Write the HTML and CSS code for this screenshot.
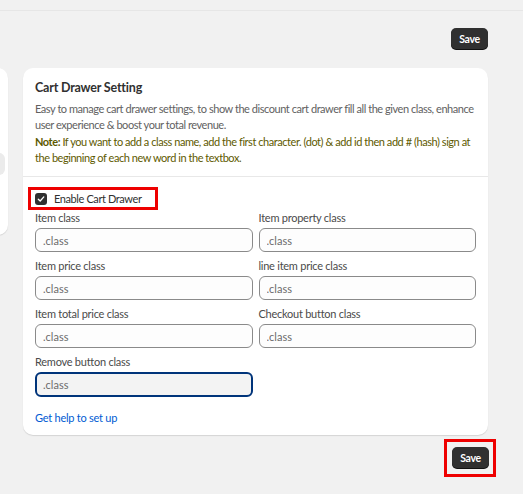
FILE: index.html
```html
<!DOCTYPE html>
<html lang="en">
<head>
    <meta charset="UTF-8">
    <meta name="viewport" content="width=device-width, initial-scale=1.0">
    <title>Cart Drawer Setting</title>
    <link rel="stylesheet" href="styles.css">
</head>
<body>
    <div class="topbar"></div>
    <div class="page">
        <div class="actions">
            <button class="btn-save">Save</button>
        </div>

        <div class="layout">
            <div class="side-card">
                <div class="side-item"></div>
            </div>

            <div class="card">
                <div class="card-head">
                    <h2>Cart Drawer Setting</h2>
                    <p class="desc">Easy to manage cart drawer settings, to show the discount cart drawer fill all the given class, enhance user experience &amp; boost your total revenue.</p>
                    <p class="note"><b>Note:</b> If you want to add a class name, add the first character. (dot) &amp; add id then add # (hash) sign at the beginning of each new word in the textbox.</p>
                </div>

                <div class="card-body">
                    <label class="enable">
                        <span class="check">
                            <svg width="8" height="8" viewBox="0 0 8 8"><path d="M1.3 4.2 L3.2 6 L6.8 1.9" fill="none" stroke="#fff" stroke-width="1.3" stroke-linecap="round" stroke-linejoin="round"/></svg>
                        </span>
                        Enable Cart Drawer
                    </label>

                    <div class="fields">
                        <div class="field">
                            <p>Item class</p>
                            <input type="text" placeholder=".class">
                        </div>
                        <div class="field">
                            <p>Item property class</p>
                            <input type="text" placeholder=".class">
                        </div>
                        <div class="field">
                            <p>Item price class</p>
                            <input type="text" placeholder=".class">
                        </div>
                        <div class="field">
                            <p>line item price class</p>
                            <input type="text" placeholder=".class">
                        </div>
                        <div class="field">
                            <p>Item total price class</p>
                            <input type="text" placeholder=".class">
                        </div>
                        <div class="field">
                            <p>Checkout button class</p>
                            <input type="text" placeholder=".class">
                        </div>
                        <div class="field">
                            <p>Remove button class</p>
                            <input type="text" class="focused" placeholder=".class">
                        </div>
                    </div>

                    <a href="#" class="help">Get help to set up</a>
                </div>
            </div>
        </div>

        <div class="actions bottom">
            <div class="mark">
                <button class="btn-save">Save</button>
            </div>
        </div>
    </div>
</body>
</html>
```

FILE: styles.css
```css
* {
    margin: 0;
    padding: 0;
    box-sizing: border-box;
}

body {
    font-family: Lato, "Open Sans", sans-serif;
    background-color: #f1f1f1;
    color: #303030;
    font-size: 11px;
    letter-spacing: -0.25px;
}
.topbar {
    height: 11px;
    border-bottom: 1px solid #e6e6e6;
}
.page {
    padding: 0 35px 0 0;
}
.actions {
    display: flex;
    justify-content: flex-end;
    padding-top: 17px;
}
.btn-save {
    background-color: #303030;
    color: white;
    font-family: inherit;
    font-size: 10.5px;
    font-weight: bold;
    letter-spacing: -0.3px;
    border: none;
    border-radius: 5px;
    width: 37px;
    height: 21px;
    cursor: pointer;
    box-shadow: 0 1px 0 #111;
}
.layout {
    display: flex;
    align-items: flex-start;
    gap: 15px;
    margin-top: 19px;
}
.side-card {
    width: 60px;
    height: 167px;
    margin-left: -52px;
    background-color: #fff;
    border-radius: 0 10px 10px 0;
    box-shadow: 0 1px 1px rgba(0, 0, 0, 0.12);
    padding-top: 85px;
}
.side-item {
    width: 57px;
    height: 22px;
    background-color: #ebebeb;
    border-radius: 0 6px 6px 0;
}
.card {
    flex: 1;
    background-color: #fff;
    border-radius: 10px;
    box-shadow: 0 1px 1px rgba(0, 0, 0, 0.12);
}
.card-head {
    padding: 12px 12px 10px;
    border-bottom: 1px solid #e8e8e8;
}
h2 {
    font-size: 12.5px;
    font-weight: 700;
    letter-spacing: -0.2px;
    color: #303030;
    margin-bottom: 6px;
}
.desc, .note {
    line-height: 16.3px;
    color: #616161;
    letter-spacing: -0.45px;
}
.note {
    color: #5e5a00;
}
.note b {
    font-weight: 700;
}
.card-body {
    padding: 10px 12px 11px;
}
.enable {
    display: inline-flex;
    align-items: center;
    gap: 7px;
    border: 3px solid #ee0000;
    padding: 0 13px 0 4px;
    height: 23px;
    margin-left: -7px;
    color: #303030;
    letter-spacing: -0.4px;
}
.check {
    width: 12px;
    height: 12px;
    background-color: #303030;
    border-radius: 3px;
    display: flex;
    align-items: center;
    justify-content: center;
}
.fields {
    display: grid;
    grid-template-columns: 1fr 1fr;
    column-gap: 6px;
    row-gap: 6px;
}
.field p {
    color: #4a4a4a;
    line-height: 15px;
    margin-bottom: 3px;
}
.field input {
    width: 100%;
    height: 24px;
    border: 1px solid #8a8a8a;
    border-radius: 6px;
    background-color: #fdfdfd;
    padding: 0 7px;
    font-family: inherit;
    font-size: 11px;
    outline: none;
}
.field input::placeholder {
    color: #6b6b6b;
}
.field input.focused {
    height: 25px;
    border: 2px solid #00347a;
    background-color: #f3f3f3;
    padding: 0 6px;
}
.help {
    display: inline-block;
    margin-top: 14px;
    color: #005bd3;
    text-decoration: none;
}
.actions.bottom {
    padding-top: 4px;
    margin-right: -8px;
}
.mark {
    border: 3px solid #ee0000;
    padding: 5px 4px 6px 5px;
}
```
